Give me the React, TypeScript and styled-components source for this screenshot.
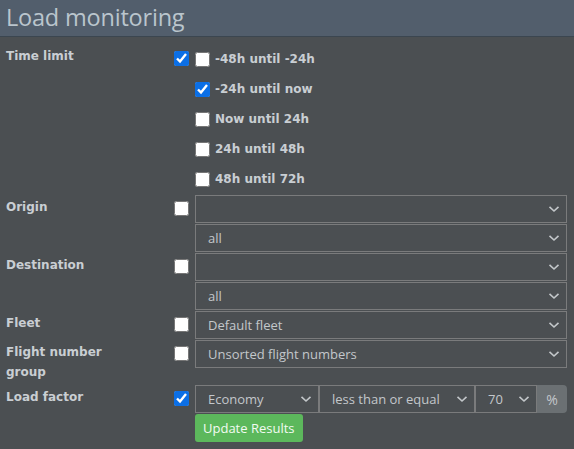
import React from "react";
import styled, { createGlobalStyle } from "styled-components";

const GlobalStyle = createGlobalStyle`
	html, body {
		margin: 0;
		padding: 0;
		background: #4b4f52;
	}
	body {
		font-family: "DejaVu Sans", Verdana, sans-serif;
	}
`;

const timeOptions = [
	{ label: "-48h until -24h", checked: false },
	{ label: "-24h until now", checked: true },
	{ label: "Now until 24h", checked: false },
	{ label: "24h until 48h", checked: false },
	{ label: "48h until 72h", checked: false },
];

const Chevron = () => (
	<svg width="12" height="8" viewBox="0 0 12 8">
		<path d="M1.5 1.8 L6 6 L10.5 1.8" fill="none" stroke="#c3c7ca" strokeWidth="1.6" />
	</svg>
);

interface SelectProps {
	value?: string;
	width?: string;
}

const Select = ({ value, width }: SelectProps) => (
	<SelectBox width={width}>
		<span>{value}</span>
		<Chevron />
	</SelectBox>
);

const App = () => {
	return (
		<Page>
			<GlobalStyle />
			<Header>Load monitoring</Header>
			<Form>
				<Label>Time limit</Label>
				<CheckCell top="7px">
					<Check type="checkbox" defaultChecked />
				</CheckCell>
				<Options>
					{timeOptions.map((o, i) => (
						<Option key={i}>
							<Check type="checkbox" defaultChecked={o.checked} />
							<span>{o.label}</span>
						</Option>
					))}
				</Options>

				<Label>Origin</Label>
				<CheckCell>
					<Check type="checkbox" />
				</CheckCell>
				<Stack>
					<Select />
					<Select value="all" />
				</Stack>

				<Label>Destination</Label>
				<CheckCell>
					<Check type="checkbox" />
				</CheckCell>
				<Stack>
					<Select />
					<Select value="all" />
				</Stack>

				<Label>Fleet</Label>
				<CheckCell>
					<Check type="checkbox" />
				</CheckCell>
				<Select value="Default fleet" />

				<Label>
					Flight number
					<br />
					group
				</Label>
				<CheckCell>
					<Check type="checkbox" />
				</CheckCell>
				<Select value="Unsorted flight numbers" />

				<Label>Load factor</Label>
				<CheckCell>
					<Check type="checkbox" defaultChecked />
				</CheckCell>
				<Stack>
					<InputGroup>
						<Select value="Economy" width="124px" />
						<Select value="less than or equal" width="156px" />
						<Select value="70" width="62px" />
						<Addon>%</Addon>
					</InputGroup>
					<Button>Update Results</Button>
				</Stack>
			</Form>
		</Page>
	);
};

const Page = styled.div`
	width: 574px;
	height: 449px;
	overflow: hidden;
	background: #4b4f52;
`;

const Header = styled.div`
	height: 37px;
	box-sizing: border-box;
	padding: 0 6px;
	background: #525e6c;
	border-bottom: 1px solid #3b4650;
	color: #bac5cd;
	font-family: "Open Sans", "Noto Sans", sans-serif;
	font-size: 23.5px;
	line-height: 35px;
	letter-spacing: -0.2px;
`;

const Form = styled.div`
	display: grid;
	grid-template-columns: 162px 27px minmax(0, 1fr);
	row-gap: 1px;
	padding: 7px 7px 0 6px;
`;

const Label = styled.div`
	width: 120px;
	padding: 2px 0;
	color: #c9ced3;
	font-size: 12px;
	font-weight: bold;
	line-height: 20px;
`;

const CheckCell = styled.div<{ top?: string }>`
	padding: ${({ top }) => top || "6px"} 0 0 6px;
`;

const Check = styled.input`
	width: 15px;
	height: 15px;
	margin: 0;
	display: block;
	flex: none;
	accent-color: #0b6fe6;
`;

const Options = styled.div`
	display: flex;
	flex-direction: column;
`;

const Option = styled.label`
	display: flex;
	align-items: center;
	gap: 5px;
	height: 30px;
	color: #c9ced3;
	font-size: 12px;
	font-weight: bold;
`;

const Stack = styled.div`
	display: flex;
	flex-direction: column;
	gap: 1px;
`;

const SelectBox = styled.div<{ width?: string }>`
	display: flex;
	align-items: center;
	justify-content: space-between;
	flex: none;
	box-sizing: border-box;
	width: ${({ width }) => width || "100%"};
	height: 28px;
	padding: 0 6px 0 12px;
	border: 1px solid #7a7b7c;
	color: #c3c7cb;
	font-family: "Open Sans", "Noto Sans", sans-serif;
	font-size: 13px;
	white-space: nowrap;
`;

const InputGroup = styled.div`
	display: flex;
`;

const Addon = styled.div`
	display: flex;
	align-items: center;
	justify-content: center;
	flex: 1;
	height: 28px;
	background: #6b7073;
	border-radius: 0 4px 4px 0;
	color: #c3c7cb;
	font-family: "Open Sans", "Noto Sans", sans-serif;
	font-size: 14px;
`;

const Button = styled.button`
	align-self: flex-start;
	height: 28px;
	padding: 0 8px;
	border: none;
	border-radius: 3px;
	background: #5cb85c;
	color: #f2fbf2;
	font-family: "Open Sans", "Noto Sans", sans-serif;
	font-size: 13px;
`;

export default App;
